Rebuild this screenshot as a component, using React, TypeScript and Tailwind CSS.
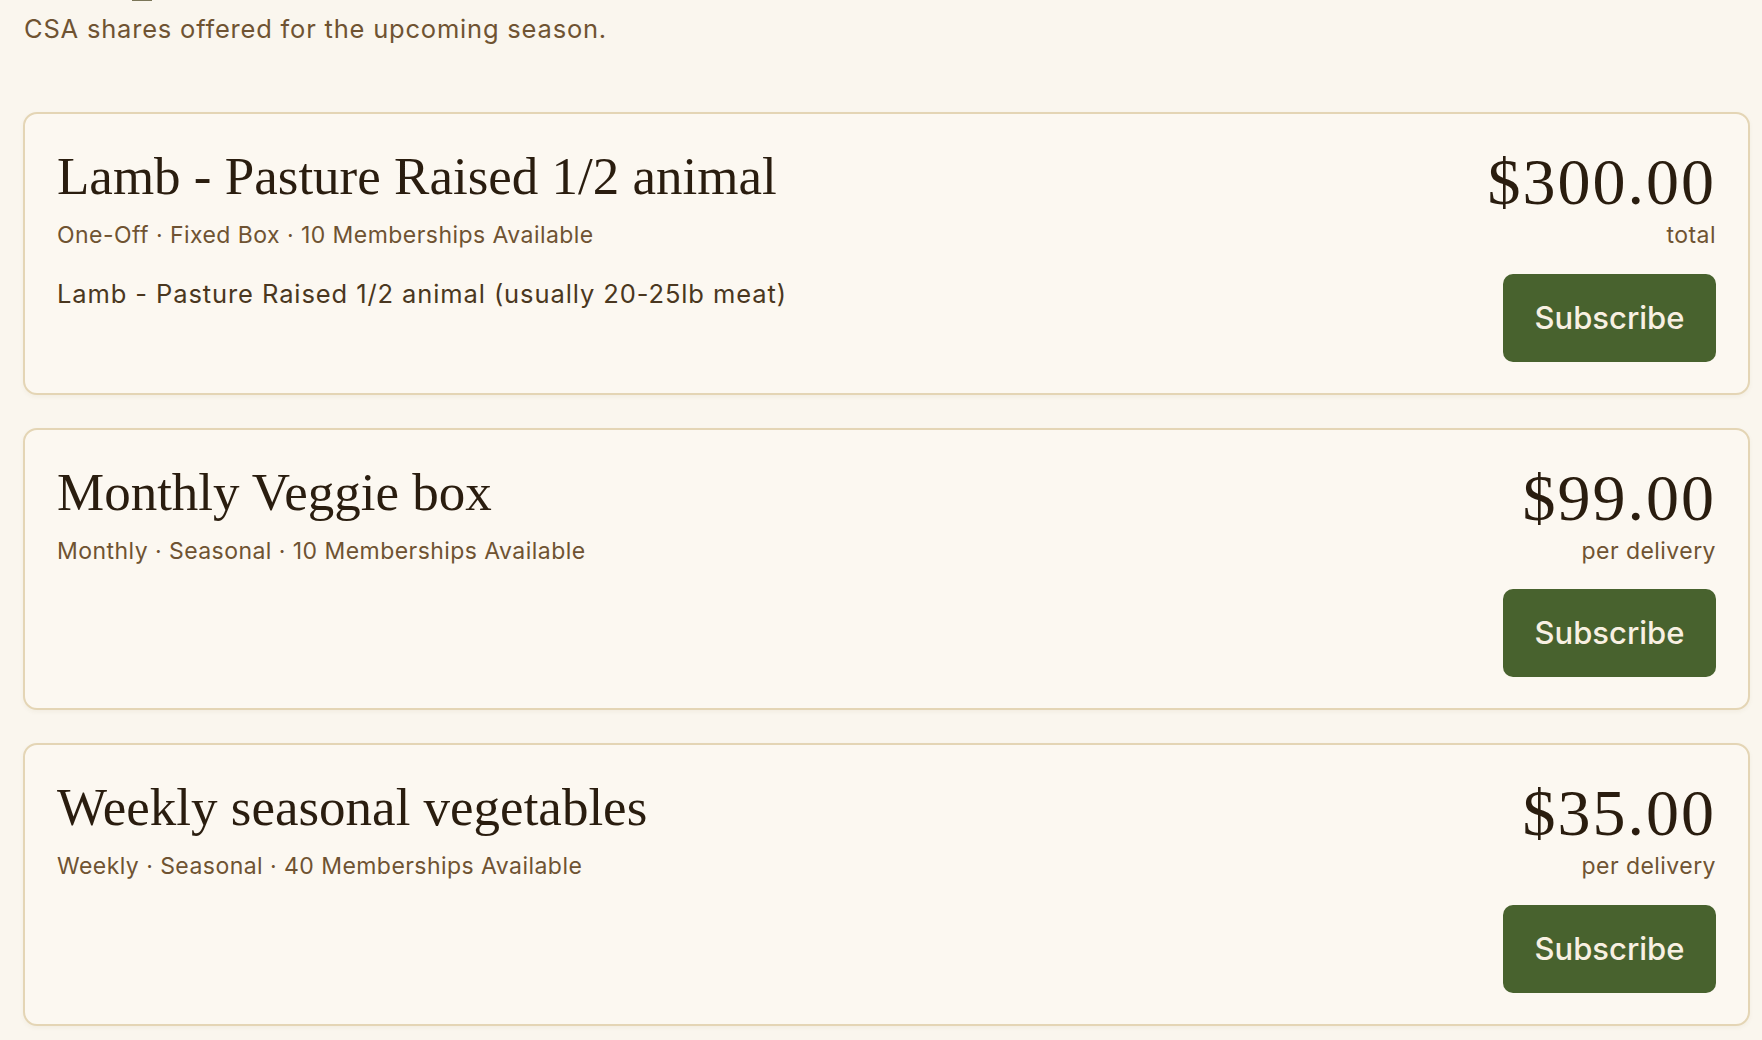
import React from "react";

type Share = {
  name: string;
  meta: string[];
  description?: string;
  price: string;
  unit: string;
};

const SHARES: Share[] = [
  {
    name: "Lamb - Pasture Raised 1/2 animal",
    meta: ["One-Off", "Fixed Box", "10 Memberships Available"],
    description: "Lamb - Pasture Raised 1/2 animal (usually 20-25lb meat)",
    price: "$300.00",
    unit: "total",
  },
  {
    name: "Monthly Veggie box",
    meta: ["Monthly", "Seasonal", "10 Memberships Available"],
    price: "$99.00",
    unit: "per delivery",
  },
  {
    name: "Weekly seasonal vegetables",
    meta: ["Weekly", "Seasonal", "40 Memberships Available"],
    price: "$35.00",
    unit: "per delivery",
  },
];

const SANS = "font-['Inter','Noto_Sans',sans-serif]";
const SERIF = "font-['Liberation_Serif','DejaVu_Serif',serif]";

function ShareCard({ share }: { share: Share }) {
  return (
    <div className="w-[1727px] bg-[#fcf8f1] border-2 border-[#e4d5b5] rounded-[14px] shadow-[0_2px_4px_rgba(120,95,50,0.06)] pt-[33px] pb-[31px] px-[32px] flex justify-between">
      <div className="flex flex-col">
        <h2 className={`${SERIF} text-[53px] leading-[1.13] text-[#2a1d0f] font-normal`}>
          {share.name}
        </h2>
        <div className={`${SANS} mt-[11px] text-[23px] leading-[1.5] tracking-[0.45px] text-[#6f5332]`}>
          {share.meta.join(" · ")}
        </div>
        {share.description && (
          <p className={`${SANS} mt-[22px] text-[25.5px] leading-[1.5] tracking-[0.9px] text-[#4a3720]`}>
            {share.description}
          </p>
        )}
      </div>

      <div className="flex flex-col items-end">
        <div className={`${SERIF} text-[66px] leading-[70px] tracking-[2px] text-[#2a1d0f] oldstyle-nums`}>
          {share.price}
        </div>
        <div className={`${SANS} mt-[1px] text-[23px] leading-[1.5] tracking-[0.45px] text-[#6f5332]`}>
          {share.unit}
        </div>
        <button
          className={`${SANS} mt-[21px] w-[213px] h-[88px] rounded-[10px] bg-[#48622e] text-[#f8f0e2] text-[31px] font-medium flex items-center justify-center`}
        >
          Subscribe
        </button>
      </div>
    </div>
  );
}

export default function App() {
  return (
    <div className="min-h-[1040px] w-[1762px] bg-[#faf6ee] overflow-hidden">
      {/* tail of the page heading, cut off at the top edge */}
      <div className="h-[10px] pl-[132px]">
        <span className="block w-[20px] h-[1px] bg-[#7b7659]" />
      </div>
      <p className={`${SANS} pl-[24px] text-[25.5px] leading-[1.5] tracking-[0.8px] text-[#6f5332]`}>
        CSA shares offered for the upcoming season.
      </p>

      <div className="mt-[64px] pl-[23px] flex flex-col gap-[33px]">
        {SHARES.map((s) => (
          <ShareCard key={s.name} share={s} />
        ))}
      </div>
    </div>
  );
}
